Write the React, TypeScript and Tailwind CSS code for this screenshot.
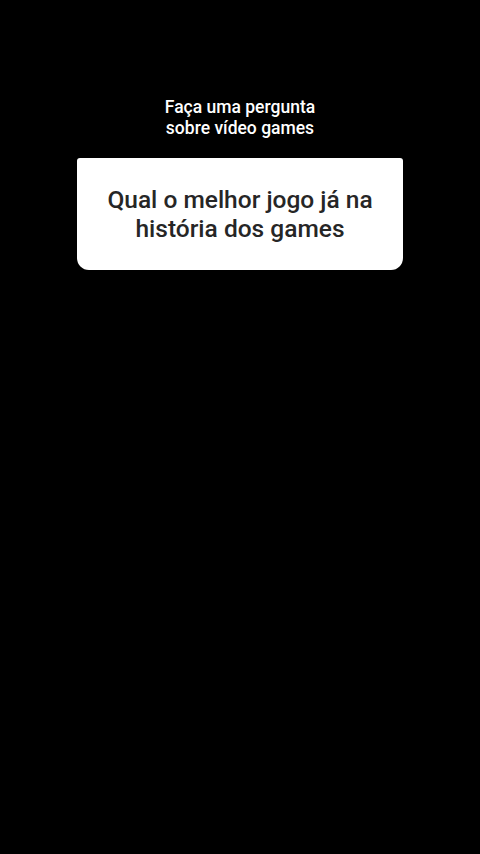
export default function App() {
  return (
    <div className="min-h-[854px] w-full bg-black flex flex-col items-center pt-[97px]" style={{ fontFamily: 'Roboto, "Noto Sans", sans-serif' }}>
      {/* prompt */}
      <p className="text-white text-[17.5px] font-medium leading-[21px] text-center">
        Faça uma pergunta
        <br />
        sobre vídeo games
      </p>

      {/* question card */}
      <div className="mt-[19px] w-[326px] h-[112px] bg-white rounded-t-[3px] rounded-b-[12px] flex items-center justify-center px-4">
        <p className="text-[#262626] text-[24.5px] font-medium leading-[29px] text-center">
          Qual o melhor jogo já na
          <br />
          história dos games
        </p>
      </div>
    </div>
  );
}
